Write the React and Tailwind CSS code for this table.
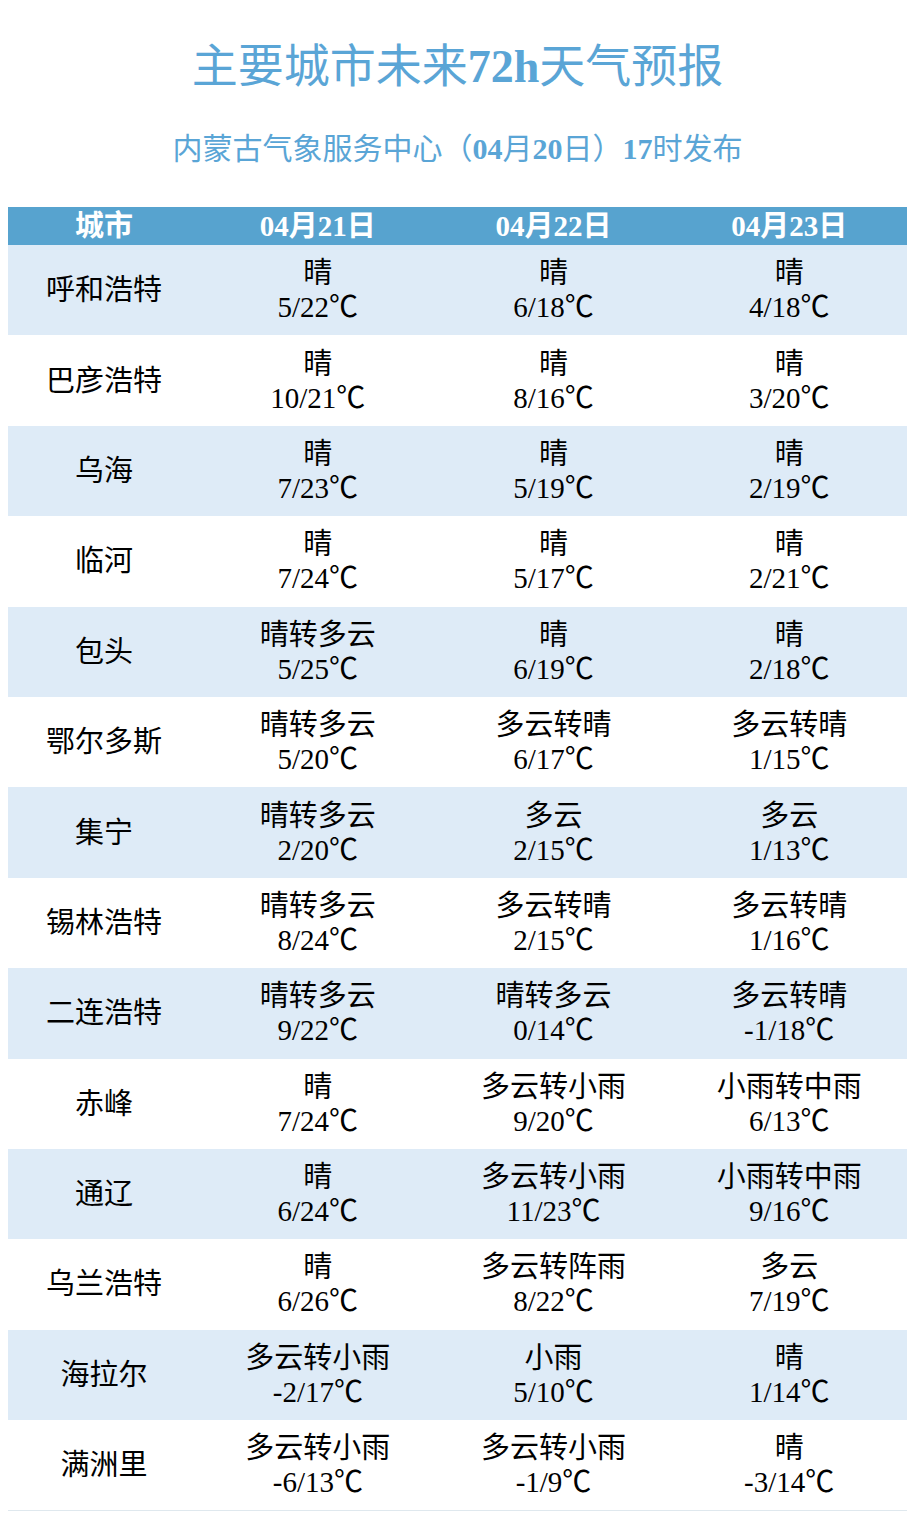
import React from "react";

const days = ["04月21日", "04月22日", "04月23日"];

// city, then [weather, temp] for each day
const rows = [
  ["呼和浩特", ["晴", "5/22℃"], ["晴", "6/18℃"], ["晴", "4/18℃"]],
  ["巴彦浩特", ["晴", "10/21℃"], ["晴", "8/16℃"], ["晴", "3/20℃"]],
  ["乌海", ["晴", "7/23℃"], ["晴", "5/19℃"], ["晴", "2/19℃"]],
  ["临河", ["晴", "7/24℃"], ["晴", "5/17℃"], ["晴", "2/21℃"]],
  ["包头", ["晴转多云", "5/25℃"], ["晴", "6/19℃"], ["晴", "2/18℃"]],
  ["鄂尔多斯", ["晴转多云", "5/20℃"], ["多云转晴", "6/17℃"], ["多云转晴", "1/15℃"]],
  ["集宁", ["晴转多云", "2/20℃"], ["多云", "2/15℃"], ["多云", "1/13℃"]],
  ["锡林浩特", ["晴转多云", "8/24℃"], ["多云转晴", "2/15℃"], ["多云转晴", "1/16℃"]],
  ["二连浩特", ["晴转多云", "9/22℃"], ["晴转多云", "0/14℃"], ["多云转晴", "-1/18℃"]],
  ["赤峰", ["晴", "7/24℃"], ["多云转小雨", "9/20℃"], ["小雨转中雨", "6/13℃"]],
  ["通辽", ["晴", "6/24℃"], ["多云转小雨", "11/23℃"], ["小雨转中雨", "9/16℃"]],
  ["乌兰浩特", ["晴", "6/26℃"], ["多云转阵雨", "8/22℃"], ["多云", "7/19℃"]],
  ["海拉尔", ["多云转小雨", "-2/17℃"], ["小雨", "5/10℃"], ["晴", "1/14℃"]],
  ["满洲里", ["多云转小雨", "-6/13℃"], ["多云转小雨", "-1/9℃"], ["晴", "-3/14℃"]],
];

const font = { fontFamily: '"Liberation Serif", "Noto Sans CJK SC", serif' };

const App = () => {
  return (
    <div className="w-[915px] bg-white pb-2" style={font}>
      {/* Title */}
      <h1 className="pt-[40px] text-center text-[46px] leading-[54px] text-[#5aa5d6]">
        主要城市未来<b>72h</b>天气预报
      </h1>
      <p className="mt-[37px] text-center text-[30px] leading-[36px] text-[#5aa5d6]">
        内蒙古气象服务中心（<b>04</b>月<b>20</b>日）<b>17</b>时发布
      </p>

      {/* Table */}
      <div className="mx-[8px] mt-[40px] border-b border-[#dfe8ee]">
        <div className="grid h-[38px] grid-cols-[192px_1fr_1fr_1fr] items-center bg-[#57a3cf] text-[29px] font-bold leading-none text-white">
          <div className="text-center">城市</div>
          {days.map((d) => (
            <div key={d} className="text-center">
              {d}
            </div>
          ))}
        </div>

        {rows.map(([city, ...cells], i) => (
          <div
            key={city}
            className={
              "grid h-[90.4px] grid-cols-[192px_1fr_1fr_1fr] items-center text-[29px] leading-[34px] text-black " +
              (i % 2 === 0 ? "bg-[#deebf7]" : "bg-white")
            }
          >
            <div className="text-center">{city}</div>
            {cells.map(([w, t], j) => (
              <div key={j} className="flex flex-col items-center">
                <span>{w}</span>
                <span>{t}</span>
              </div>
            ))}
          </div>
        ))}
      </div>
    </div>
  );
};

export default App;
